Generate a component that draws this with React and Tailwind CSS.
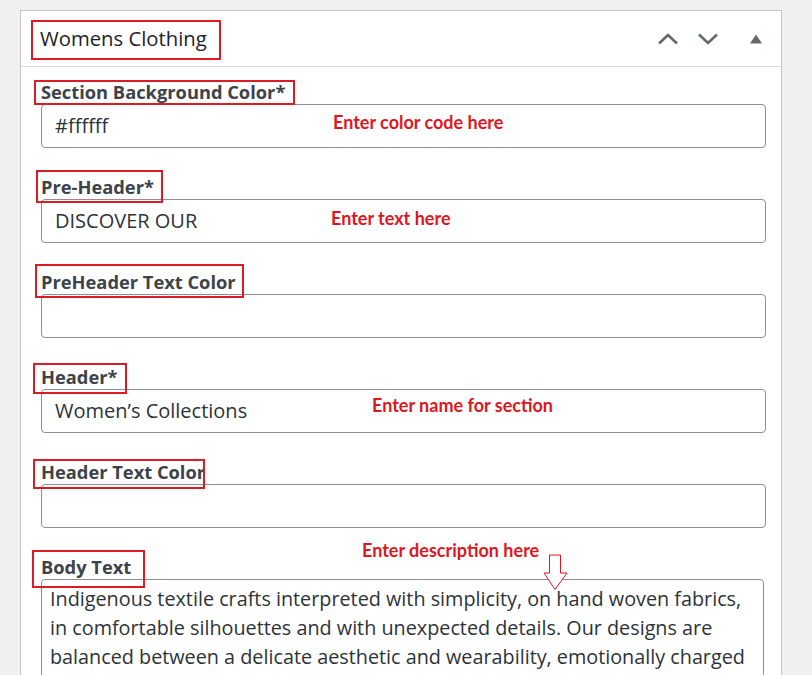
import React from 'react';

const fields = [
  { label: 'Section Background Color*', value: '#ffffff', box: 'top-0 -bottom-px -left-[7px] -right-[10px]' },
  { label: 'Pre-Header*', value: 'DISCOVER OUR', box: '-top-[5px] -bottom-[4px] -left-[5px] -right-[9px]' },
  { label: 'PreHeader Text Color', value: '', box: '-top-[6px] -bottom-[4px] -left-[6px] -right-[8px]' },
  { label: 'Header*', value: 'Women’s Collections', box: '-top-[2px] -bottom-[5px] -left-[8px] -right-[10px]' },
  { label: 'Header Text Color', value: '', box: '-top-px -bottom-[5px] -left-[8px] right-0' },
];

const bodyLines = [
  'Indigenous textile crafts interpreted with simplicity, on hand woven fabrics,',
  'in comfortable silhouettes and with unexpected details. Our designs are',
  'balanced between a delicate aesthetic and wearability, emotionally charged',
];

const Label = ({ text, box }) => (
  <div className="h-[24px] leading-[24px]">
    <span className="relative inline-block text-[18.3px] font-bold text-[#3c434a]">
      {text}
      <span className={`absolute border-2 border-[#dc1c24] ${box}`}></span>
    </span>
  </div>
);

const Note = ({ text, className }) => (
  <span
    className={`absolute whitespace-nowrap text-[18px] font-bold leading-none text-[#e0161e] ${className}`}
    style={{ fontFamily: 'Lato, "Liberation Sans", sans-serif' }}
  >
    {text}
  </span>
);

export default function App() {
  return (
    <div
      className="relative h-[675px] w-[812px] overflow-hidden bg-[#f0f0f1] pt-[10px] pl-[20px]"
      style={{ fontFamily: '"Open Sans", "Noto Sans", sans-serif' }}
    >
      <div className="w-[762px] border border-[#c3c4c7] bg-white">
        {/* Header */}
        <div className="flex h-[56px] items-center border-b border-[#dcdcde] pl-[19px] pr-[19px]">
          <span className="relative text-[20.3px] text-[#1d2327]">
            Womens Clothing
            <span className="absolute -top-[3px] -bottom-[6px] -left-[9px] -right-[14px] border-2 border-[#dc1c24]"></span>
          </span>
          <div className="ml-auto flex items-center">
            <svg width="22" height="12" viewBox="0 0 22 12" className="text-[#646970]">
              <path d="M2 10.5 L11 2 L20 10.5" fill="none" stroke="currentColor" strokeWidth="2.6" />
            </svg>
            <svg width="22" height="12" viewBox="0 0 22 12" className="ml-[18px] text-[#646970]">
              <path d="M2 1.5 L11 10 L20 1.5" fill="none" stroke="currentColor" strokeWidth="2.6" />
            </svg>
            <svg width="12" height="10" viewBox="0 0 12 10" className="ml-[31px] text-[#646970]">
              <path d="M6 0.5 L12 9.5 L0 9.5 Z" fill="currentColor" />
            </svg>
          </div>
        </div>

        {/* Fields */}
        <div className="pt-[13px] pl-[20px] pr-[15px]">
          {fields.map((f) => (
            <div key={f.label} className="mb-[27px]">
              <Label text={f.label} box={f.box} />
              <div className="flex h-[44px] items-center rounded-[4px] border border-[#8c8f94] px-[13px] text-[20px] text-[#2c3338]">
                {f.value}
              </div>
            </div>
          ))}

          <div>
            <Label text="Body Text" box="-top-[5px] -bottom-[9px] -left-[9px] -right-[14px]" />
            <div className="mr-[2px] h-[160px] rounded-[4px] border border-[#8c8f94] px-[8px] pt-[4px] text-[19.8px] leading-[29px] text-[#2c3338]">
              {bodyLines.map((line) => (
                <div key={line} className="whitespace-nowrap">{line}</div>
              ))}
            </div>
          </div>
        </div>
      </div>

      {/* Annotations */}
      <Note text="Enter color code here" className="left-[333px] top-[113px]" />
      <Note text="Enter text here" className="left-[331px] top-[209px]" />
      <Note text="Enter name for section" className="left-[372px] top-[396px]" />
      <Note text="Enter description here" className="left-[362px] top-[541px]" />
      <svg width="26" height="38" viewBox="0 0 26 38" className="absolute left-[543px] top-[554px]">
        <path d="M6.5 1 L17.5 1 L17.5 19 L24 19 L12 35.5 L1 19 L6.5 19 Z" fill="white" stroke="#e0161e" strokeWidth="1" />
      </svg>
    </div>
  );
}
